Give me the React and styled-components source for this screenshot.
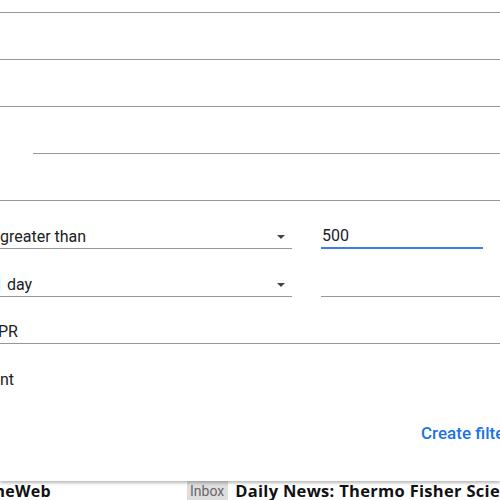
import React from "react";
import styled, { createGlobalStyle } from "styled-components";

const GlobalStyle = createGlobalStyle`
  body {
    margin: 0;
    font-family: Roboto, "Noto Sans", Arial, sans-serif;
    color: #202124;
    background: #fff;
  }
`;

const Page = styled.div`
  width: 500px;
  height: 500px;
  overflow: hidden;
  background: #fff;
`;

const Dialog = styled.div`
  position: relative;
  z-index: 1;
  height: 481px;
  background: #fff;
  box-shadow: 0 2px 3px rgba(0, 0, 0, 0.28);
  display: flex;
  flex-direction: column;
`;

const Fields = styled.div`
  margin-top: -34px;
  display: flex;
  flex-direction: column;
`;

const TextLine = styled.div`
  box-sizing: border-box;
  height: 47px;
  margin-left: ${(p) => p.$indent || 0}px;
  border-bottom: 1px solid #979797;
`;

const Row = styled.div`
  display: flex;
  gap: 29px;
  height: ${(p) => p.$height || 47}px;
`;

const Select = styled.div`
  box-sizing: border-box;
  width: ${(p) => p.$width || 292}px;
  flex: none;
  display: flex;
  align-items: flex-end;
  justify-content: space-between;
  padding: 0 7px 1px 0;
  border-bottom: 1px solid #979797;
  font-size: 16px;
  line-height: 20px;
  white-space: nowrap;
`;

const SelectText = styled.span`
  margin-left: ${(p) => p.$shift || 0}px;
`;

const Caret = styled.span`
  width: 0;
  height: 0;
  margin-bottom: 8px;
  border-left: 4px solid transparent;
  border-right: 4px solid transparent;
  border-top: 4px solid #444;
`;

const Input = styled.div`
  box-sizing: border-box;
  width: ${(p) => (p.$width ? `${p.$width}px` : "auto")};
  flex: ${(p) => (p.$width ? "none" : "1")};
  display: flex;
  align-items: flex-end;
  padding: 0 0 1px 1px;
  border-bottom: ${(p) => (p.$focused ? "2px solid #3b7ded" : "1px solid #979797")};
  font-size: 16px;
  line-height: 20px;
`;

const CheckRow = styled.div`
  display: flex;
  padding-top: 26px;
  height: 20px;
`;

const CutLabel = styled.div`
  width: ${(p) => p.$end}px;
  display: flex;
  justify-content: flex-end;
  white-space: nowrap;
  font-size: 16px;
  line-height: 20px;
`;

const Actions = styled.div`
  display: flex;
  gap: 24px;
  padding: 33px 0 0 421px;
  white-space: nowrap;
`;

const TextButton = styled.span`
  color: #1a73e8;
  font-size: 17px;
  font-weight: 500;
  line-height: 21px;
`;

const MailRow = styled.div`
  display: flex;
  align-items: flex-start;
  height: 19px;
  white-space: nowrap;
  font-family: "Open Sans", Roboto, sans-serif;
`;

const Sender = styled.div`
  width: 51px;
  flex: none;
  display: flex;
  justify-content: flex-end;
  font-size: 16px;
  font-weight: 700;
  letter-spacing: 0.3px;
  line-height: 20px;
  color: #111;
`;

const Badge = styled.span`
  margin-left: 136px;
  padding: 0 4px 0 3px;
  background: #dedede;
  color: #666;
  font-family: Roboto, sans-serif;
  font-size: 14px;
  line-height: 20px;
`;

const Subject = styled.span`
  margin-left: 7px;
  font-size: 16.5px;
  font-weight: 700;
  letter-spacing: 0.3px;
  line-height: 20px;
  color: #111;
`;

export default function App() {
  return (
    <Page>
      <GlobalStyle />
      <Dialog>
        <Fields>
          <TextLine />
          <TextLine />
          <TextLine />
          <TextLine $indent={33} />
          <TextLine />
          <Row $height={48}>
            <Select>
              <SelectText>greater than</SelectText>
              <Caret />
            </Select>
            <Input $width={162} $focused>500</Input>
          </Row>
          <Row $height={48}>
            <Select>
              <SelectText $shift={-6}>1 day</SelectText>
              <Caret />
            </Select>
            <Input />
          </Row>
          <Row>
            <Select $width={600}>
              <SelectText $shift={-2}>PR</SelectText>
            </Select>
          </Row>
        </Fields>
        <CheckRow>
          <CutLabel $end={14}>Has attachment</CutLabel>
        </CheckRow>
        <Actions>
          <TextButton>Create filter</TextButton>
          <TextButton>Search</TextButton>
        </Actions>
      </Dialog>
      <MailRow>
        <Sender>GenomeWeb</Sender>
        <Badge>Inbox</Badge>
        <Subject>Daily News: Thermo Fisher Scientific</Subject>
      </MailRow>
    </Page>
  );
}
